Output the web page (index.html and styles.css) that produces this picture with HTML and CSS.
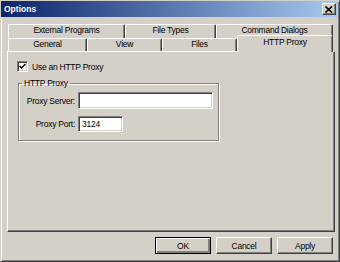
FILE: index.html
```html
<!DOCTYPE html>
<html lang="en">
<head>
  <meta charset="UTF-8">
  <title>Options</title>
  <link rel="stylesheet" href="styles.css">
</head>
<body>
  <div class="window">
    <div class="titlebar">
      <span class="title">Options</span>
      <span class="close">
        <svg width="8" height="7" viewBox="0 0 8 7">
          <path d="M0.5 0.5 L7 6.5 M7 0.5 L0.5 6.5" stroke="#000" stroke-width="1.6" fill="none"/>
        </svg>
      </span>
    </div>

    <div class="content">
      <div class="tabs">
        <div class="tab-row row-back">
          <div class="tab tab-ext">External Programs</div>
          <div class="tab tab-types">File Types</div>
          <div class="tab tab-cmd">Command Dialogs</div>
        </div>
        <div class="tab-row row-front">
          <div class="tab tab-general">General</div>
          <div class="tab tab-view">View</div>
          <div class="tab tab-files">Files</div>
          <div class="tab tab-proxy selected">HTTP Proxy</div>
        </div>
      </div>

      <div class="panel">
        <label class="check">
          <span class="checkbox">
            <svg width="7" height="7" viewBox="0 0 7 7">
              <path d="M0.5 3 L2.5 5 L6.5 1" stroke="#000" stroke-width="1.5" fill="none"/>
            </svg>
          </span>
          Use an HTTP Proxy
        </label>

        <fieldset class="group">
          <legend>HTTP Proxy</legend>
          <div class="field">
            <span class="field-label">Proxy Server:</span>
            <span class="input input-wide"></span>
          </div>
          <div class="field">
            <span class="field-label">Proxy Port:</span>
            <span class="input input-port">3124</span>
          </div>
        </fieldset>
      </div>

      <div class="buttons">
        <button class="btn default">OK</button>
        <button class="btn">Cancel</button>
        <button class="btn">Apply</button>
      </div>
    </div>
  </div>
</body>
</html>
```

FILE: styles.css
```css
body {
  margin: 0;
  font-family: "Liberation Sans", Arial, sans-serif;
  font-size: 8.5px;
  letter-spacing: -0.25px;
  color: #000;
  background: #d4d0c8;
}
.window {
  width: 340px;
  height: 262px;
  box-sizing: border-box;
  background: #d4d0c8;
  border: 1px solid;
  border-color: #d4d0c8 #404040 #404040 #d4d0c8;
  box-shadow: inset 1px 1px #fff, inset -1px -1px #808080;
  padding: 0 1px 1px 0;
  display: flex;
  flex-direction: column;
}
.titlebar {
  height: 16px;
  background: linear-gradient(to right, #0a246a, #a6caf0);
  display: flex;
  align-items: center;
  justify-content: space-between;
  padding: 0 2px 0 3px;
}
.title {
  color: #fff;
  font-weight: bold;
  font-size: 8.5px;
  letter-spacing: 0;
}
.close {
  width: 14px;
  height: 12px;
  box-sizing: border-box;
  background: #d4d0c8;
  border: 1px solid;
  border-color: #fff #404040 #404040 #fff;
  box-shadow: inset -1px -1px #808080;
  display: flex;
  align-items: center;
  justify-content: center;
}
.content {
  flex: 1;
  padding: 7px 3px 0 6px;
  display: flex;
  flex-direction: column;
}

/* tabs */
.tabs {
  padding: 0 0 0 1px;
}
.tab-row {
  display: flex;
}
.row-back {
  height: 14px;
}
.row-front {
  height: 13px;
}
.tab {
  box-sizing: border-box;
  height: 14px;
  border-top: 1px solid #fff;
  border-left: 1px solid #fff;
  border-right: 1px solid #404040;
  box-shadow: inset -1px 0 #808080;
  border-radius: 2px 2px 0 0;
  text-align: center;
  line-height: 11px;
  background: #d4d0c8;
}
.row-front .tab {
  height: 13px;
}
.tab-ext { width: 117px; }
.tab-types { width: 91px; }
.tab-cmd { width: 117px; }
.tab-general { width: 79px; }
.tab-view { width: 75px; }
.tab-files { width: 75px; }
.tab-proxy { width: 96px; }
.row-front .tab.selected {
  position: relative;
  z-index: 1;
  height: 17px;
  margin-top: -3px;
  margin-right: -1px;
  line-height: 13px;
}

/* panel */
.panel {
  height: 181px;
  box-sizing: border-box;
  border: 1px solid;
  border-color: #fff #404040 #404040 #fff;
  box-shadow: inset -1px -1px #808080;
  padding: 9px 0 0 9px;
}
.check {
  display: flex;
  align-items: center;
  gap: 4px;
  height: 11px;
}
.checkbox {
  width: 11px;
  height: 11px;
  box-sizing: border-box;
  background: #fff;
  border: 1px solid;
  border-color: #808080 #fff #fff #808080;
  box-shadow: inset 1px 1px #404040, inset -1px -1px #d4d0c8;
  display: flex;
  align-items: center;
  justify-content: center;
}
.group {
  width: 201px;
  height: 63px;
  box-sizing: border-box;
  margin: 6px 0 0 1px;
  padding: 4px 0 0 0;
  border: 1px solid #808080;
  box-shadow: inset 1px 1px #fff, 1px 1px #fff;
}
.group legend {
  margin-left: 3px;
  padding: 0 2px;
}
.field {
  display: flex;
  align-items: center;
  gap: 3px;
  margin-bottom: 7px;
}
.field-label {
  width: 56px;
  text-align: right;
}
.input {
  box-sizing: border-box;
  height: 17px;
  background: #fff;
  border: 1px solid;
  border-color: #808080 #fff #fff #808080;
  box-shadow: inset 1px 1px #404040, inset -1px -1px #d4d0c8;
  padding: 0 3px;
  line-height: 15px;
}
.input-wide { width: 135px; }
.input-port { width: 45px; height: 16px; line-height: 14px; }

/* buttons */
.buttons {
  display: flex;
  justify-content: flex-end;
  gap: 5px;
  margin: 5px 2px 0 0;
}
.btn {
  width: 56px;
  height: 17px;
  box-sizing: border-box;
  font-family: inherit;
  font-size: 8.5px;
  letter-spacing: -0.25px;
  color: #000;
  background: #d4d0c8;
  border: 1px solid;
  border-color: #fff #404040 #404040 #fff;
  box-shadow: inset -1px -1px #808080;
  padding: 0;
}
.btn.default {
  border: 1px solid #000;
  box-shadow: inset 1px 1px #fff, inset -2px -2px #808080;
}
```
